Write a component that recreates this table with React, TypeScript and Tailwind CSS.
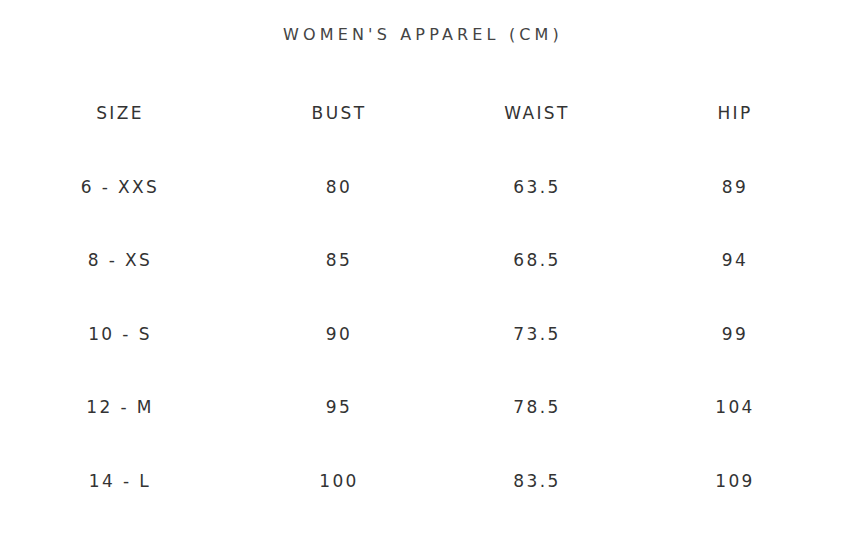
const rows = [
  ["6 - XXS", "80", "63.5", "89"],
  ["8 - XS", "85", "68.5", "94"],
  ["10 - S", "90", "73.5", "99"],
  ["12 - M", "95", "78.5", "104"],
  ["14 - L", "100", "83.5", "109"],
];

const headers = ["SIZE", "BUST", "WAIST", "HIP"];

export default function App() {
  return (
    <div className="w-[862px] h-[547px] bg-white text-[#333] font-['DejaVu_Sans',sans-serif]">
      <div className="w-[846px] h-[76px] flex justify-center pt-[24px]">
        <h2 className="text-[16px] leading-[22px] tracking-[0.26em] text-[#444]">WOMEN'S APPAREL (CM)</h2>
      </div>
      <div className="grid grid-cols-[240px_198px_198px_198px] auto-rows-[73.5px] text-[17px] tracking-[0.14em]">
        {headers.map((h) => (
          <div key={h} className="flex items-center justify-center pt-[2px]">{h}</div>
        ))}
        {rows.map((r, i) =>
          r.map((c, j) => (
            <div key={i + "-" + j} className="flex items-center justify-center pt-[2px]">{c}</div>
          ))
        )}
      </div>
    </div>
  );
}
